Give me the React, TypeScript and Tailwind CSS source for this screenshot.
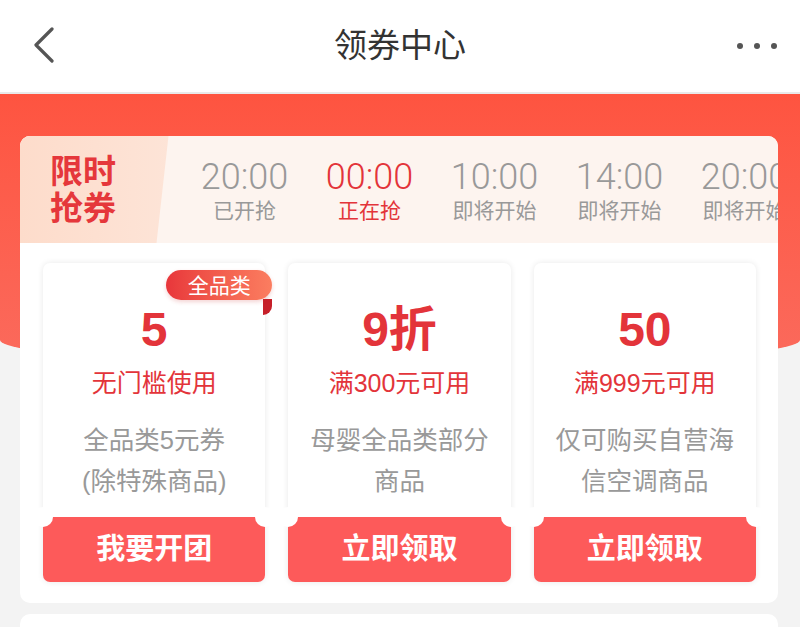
type Slot = { time: string; label: string; active?: boolean };

type Coupon = {
	value: string;
	rule: string;
	desc: string[];
	action: string;
	tag?: string;
};

const slots: Slot[] = [
	{ time: '20:00', label: '已开抢' },
	{ time: '00:00', label: '正在抢', active: true },
	{ time: '10:00', label: '即将开始' },
	{ time: '14:00', label: '即将开始' },
	{ time: '20:00', label: '即将开始' },
];

const coupons: Coupon[] = [
	{ value: '5', rule: '无门槛使用', desc: ['全品类5元券', '(除特殊商品)'], action: '我要开团', tag: '全品类' },
	{ value: '9折', rule: '满300元可用', desc: ['母婴全品类部分', '商品'], action: '立即领取' },
	{ value: '50', rule: '满999元可用', desc: ['仅可购买自营海', '信空调商品'], action: '立即领取' },
];

const CouponCard = ({ coupon }: { coupon: Coupon }) => {
	return (
		<div className="relative flex h-[319px] flex-col rounded-[7px] bg-white shadow-[0_0_6px_rgba(0,0,0,0.09)]">
			{coupon.tag && (
				<>
					<div className="absolute right-[-7px] top-[36px] h-[16px] w-[9px] rounded-br-[9px] bg-[#c61f29]" />
					<div className="absolute right-[-7px] top-[7px] flex h-[30px] w-[106px] items-center justify-center rounded-full bg-gradient-to-r from-[#e8363b] to-[#fb7d60] text-[21px] leading-none text-white shadow-[0_2px_4px_rgba(200,40,40,0.2)]">
						{coupon.tag}
					</div>
				</>
			)}
			<div className="flex flex-1 flex-col items-center pt-[43px]">
				<div className="text-[48px] font-bold leading-[48px] text-[#e3343a]">{coupon.value}</div>
				<div className="mt-[14px] text-[25px] leading-[30px] text-[#e3343a]">{coupon.rule}</div>
				<div className="mt-[22px] text-center text-[25.5px] leading-[41px] text-[#999]">
					{coupon.desc.map((line, i) => (
						<div key={i}>{line}</div>
					))}
				</div>
			</div>
			<div className="flex h-[65px] items-center justify-center rounded-b-[7px] bg-[#fd5a5a] text-[29px] font-bold text-white">
				{coupon.action}
			</div>
			{/* ticket notches */}
			<div className="absolute left-[-10px] top-[244px] h-[20px] w-[20px] rounded-full bg-white" />
			<div className="absolute right-[-10px] top-[244px] h-[20px] w-[20px] rounded-full bg-white" />
		</div>
	);
};

export default function App() {
	return (
		<div className="relative h-[627px] w-[800px] overflow-hidden bg-[#f3f3f3] font-['Liberation_Sans','Noto_Sans_CJK_SC',sans-serif]">
			<header className="flex h-[94px] items-center justify-between border-b-2 border-[#e9e9e9] bg-white pl-[32px] pr-[22px]">
				<div className="flex w-[70px]">
					<svg width="24" height="36" viewBox="0 0 24 36" className="mt-[-2px]">
						<polyline
							points="20,2 4,18 20,34"
							fill="none"
							stroke="#555"
							strokeWidth="3.2"
							strokeLinecap="round"
							strokeLinejoin="round"
						/>
					</svg>
				</div>
				<h1 className="text-[33px] font-normal text-[#333]">领券中心</h1>
				<div className="flex w-[80px] items-center justify-end gap-[11px] pr-[1px]">
					<span className="h-[6px] w-[6px] rounded-full bg-[#555]" />
					<span className="h-[6px] w-[6px] rounded-full bg-[#555]" />
					<span className="h-[6px] w-[6px] rounded-full bg-[#555]" />
				</div>
			</header>

			<div className="h-[272px] rounded-b-[50%_26px] bg-gradient-to-b from-[#fe5440] to-[#fb6a5c]" />

			<div className="relative -mt-[230px]">
				<div className="ml-[20px] w-[758px] overflow-hidden rounded-[10px] bg-white">
					<div className="flex h-[107px] bg-[#fdf4ef]">
						<div className="flex w-[150px] shrink-0 flex-col justify-center bg-gradient-to-r from-[#fddccb] to-[#fde4d7] pl-[30px] text-[33px] font-bold leading-[37px] text-[#e5373b] [clip-path:polygon(0_0,99%_0,91%_100%,0_100%)]">
							<span>限时</span>
							<span>抢券</span>
						</div>
						<div className="ml-[12px] flex">
							{slots.map((s, i) => (
								<div
									key={i}
									className={`flex w-[125px] shrink-0 flex-col items-center pt-[21px] ${s.active ? 'text-[#e3343a]' : 'text-[#999]'}`}
								>
									<span className="font-['Roboto','Liberation_Sans',sans-serif] text-[36px] font-light leading-[40px]">
										{s.time}
									</span>
									<span className="mt-[1px] text-[21px] leading-[26px]">{s.label}</span>
								</div>
							))}
						</div>
					</div>
					<div className="grid grid-cols-3 gap-[23px] pb-[21px] pl-[23px] pr-[22px] pt-[20px]">
						{coupons.map((c, i) => (
							<CouponCard key={i} coupon={c} />
						))}
					</div>
				</div>
				<div className="ml-[20px] mt-[11px] h-[40px] w-[758px] rounded-t-[10px] bg-white" />
			</div>
		</div>
	);
}
